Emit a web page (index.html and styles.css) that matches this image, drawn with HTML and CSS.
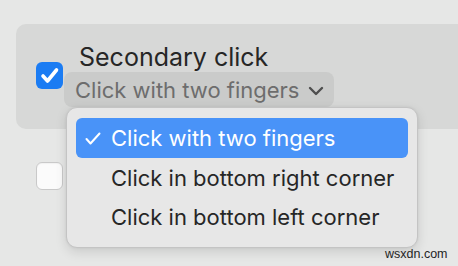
FILE: index.html
```html
<!DOCTYPE html>
<html>
<head>
<meta charset="utf-8">
<link rel="stylesheet" href="styles.css">
</head>
<body>
<div class="page">
  <div class="panel">
    <div class="checkbox checked">
      <svg width="27" height="27" viewBox="0 0 27 27"><polyline points="7,14 11.5,19 20.5,8" fill="none" stroke="#fff" stroke-width="3.6" stroke-linecap="round" stroke-linejoin="round"/></svg>
    </div>
    <div class="col">
      <div class="title">Secondary click</div>
      <div class="popup">
        <span class="popup-label">Click with two fingers</span>
        <svg class="chev" width="16" height="10" viewBox="0 0 16 10"><polyline points="2,2 8,8 14,2" fill="none" stroke="#4e4e4e" stroke-width="2.4" stroke-linecap="round" stroke-linejoin="round"/></svg>
      </div>
    </div>
  </div>
  <div class="row2">
    <div class="checkbox"></div>
  </div>
  <div class="menu">
    <div class="item selected">
      <svg class="tick" width="16" height="13" viewBox="0 0 16 13"><polyline points="1.5,7 5.5,11.5 14.5,1.5" fill="none" stroke="#fff" stroke-width="2" stroke-linecap="round" stroke-linejoin="round"/></svg>
      <span>Click with two fingers</span>
    </div>
    <div class="item"><span>Click in bottom right corner</span></div>
    <div class="item"><span>Click in bottom left corner</span></div>
  </div>
  <div class="watermark">wsxdn.com</div>
</div>
</body>
</html>
```
FILE: styles.css
```css
html, body {
  margin: 0;
  padding: 0;
}
body {
  background: #e6e7e6;
  font-family: Inter, "Noto Sans", sans-serif;
  color: #262626;
}
.page {
  position: relative;
  width: 458px;
  height: 266px;
  overflow: hidden;
}
.panel {
  margin: 24px 0 0 16px;
  height: 105px;
  background: #d7d8d7;
  border-radius: 10px 0 0 10px;
  display: flex;
  align-items: flex-start;
  padding-left: 20px;
  box-sizing: border-box;
}
.checkbox {
  width: 27px;
  height: 27px;
  border-radius: 6px;
  box-sizing: border-box;
  flex: none;
}
.panel .checkbox {
  margin-top: 38px;
  background: #1b7cf3;
}
.panel .checkbox svg {
  display: block;
}
.col {
  margin-left: 1px;
  display: flex;
  flex-direction: column;
}
.title {
  font-size: 25px;
  line-height: 30px;
  margin-top: 18px;
  padding-left: 15px;
}
.popup {
  height: 35px;
  width: 270px;
  box-sizing: border-box;
  background: #cacbca;
  border-radius: 8px;
  display: flex;
  align-items: center;
  padding-left: 11px;
}
.popup-label {
  font-size: 22px;
  color: #6d6d6d;
}
.chev {
  margin-left: 9px;
  margin-top: 3px;
}
.row2 {
  padding: 33px 0 0 36px;
}
.row2 .checkbox {
  background: #fbfbfb;
  border: 1px solid #c9c9c9;
  height: 28px;
  box-shadow: inset 0 1px 1px rgba(0,0,0,0.04);
}
.menu {
  position: absolute;
  left: 66px;
  top: 107px;
  width: 352px;
  height: 141px;
  box-sizing: border-box;
  background: #e7e7e7;
  border: 1px solid #c4c4c4;
  border-radius: 11px;
  box-shadow: 0 4px 12px rgba(0,0,0,0.12), 0 0 3px rgba(0,0,0,0.06);
  padding: 10px 9px;
  display: flex;
  flex-direction: column;
}
.item {
  height: 40px;
  display: flex;
  align-items: center;
  padding-left: 35px;
  font-size: 22px;
  color: #262626;
  border-radius: 6px;
  position: relative;
}
.item.selected {
  background: #4993f8;
  color: #fff;
}
.tick {
  position: absolute;
  left: 9px;
  top: 14px;
}
.watermark {
  position: absolute;
  left: 385px;
  top: 247px;
  font-family: "Liberation Sans", Arial, sans-serif;
  font-size: 12.5px;
  color: #1f1f1f;
}
```
